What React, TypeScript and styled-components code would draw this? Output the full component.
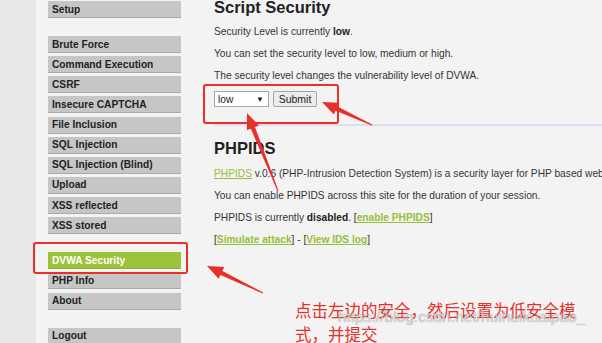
import React from "react";
import styled, { createGlobalStyle } from "styled-components";

const Colors = {
  page: "#f3f3f3",
  stripe: "#e8e8e8",
  menu: "#c6c6c6",
  menuEdge: "#a9a9a9",
  active: "#9dc33b",
  text: "#333",
  link: "#98bf3b",
  red: "#e8302a",
};

const GlobalStyle = createGlobalStyle`
  html, body {
    margin: 0;
    padding: 0;
    background: ${Colors.page};
  }
  body {
    width: 602px;
    height: 343px;
    overflow: hidden;
    font-family: "Liberation Sans", Arial, sans-serif;
  }
`;

const menuGroups: string[][] = [
  ["Setup"],
  [
    "Brute Force",
    "Command Execution",
    "CSRF",
    "Insecure CAPTCHA",
    "File Inclusion",
    "SQL Injection",
    "SQL Injection (Blind)",
    "Upload",
    "XSS reflected",
    "XSS stored",
  ],
  ["DVWA Security", "PHP Info", "About"],
  ["Logout"],
];

type Pt = [number, number];

// tapered arrow: thin tail, wider near the head, triangular head at the tip
const arrowPoints = (tail: Pt, tip: Pt, headLen = 16, headW = 13, w0 = 1, w1 = 4.5) => {
  const dx = tip[0] - tail[0];
  const dy = tip[1] - tail[1];
  const len = Math.hypot(dx, dy);
  const ux = dx / len;
  const uy = dy / len;
  const nx = -uy;
  const ny = ux;
  const bx = tip[0] - ux * headLen;
  const by = tip[1] - uy * headLen;
  const pts: Pt[] = [
    [tail[0] + (nx * w0) / 2, tail[1] + (ny * w0) / 2],
    [bx + (nx * w1) / 2, by + (ny * w1) / 2],
    [bx + (nx * headW) / 2, by + (ny * headW) / 2],
    tip,
    [bx - (nx * headW) / 2, by - (ny * headW) / 2],
    [bx - (nx * w1) / 2, by - (ny * w1) / 2],
    [tail[0] - (nx * w0) / 2, tail[1] - (ny * w0) / 2],
  ];
  return pts.map((p) => `${p[0].toFixed(1)},${p[1].toFixed(1)}`).join(" ");
};

export default function App() {
  return (
    <>
      <GlobalStyle />
      <Page>
        <Stripe />
        <Sidebar>
          {menuGroups.map((group, gi) => (
            <MenuGroup key={gi}>
              {group.map((item) => (
                <MenuItem key={item} active={item === "DVWA Security"}>
                  {item}
                </MenuItem>
              ))}
            </MenuGroup>
          ))}
        </Sidebar>

        <Main>
          <Heading>Script Security</Heading>
          <Para>
            Security Level is currently <b>low</b>.
          </Para>
          <Para>You can set the security level to low, medium or high.</Para>
          <Para>The security level changes the vulnerability level of DVWA.</Para>
          <Form>
            <SelectBox>
              <span>low</span>
              <Caret>▼</Caret>
            </SelectBox>
            <SubmitButton>Submit</SubmitButton>
          </Form>
          <Rule />
          <Heading second>PHPIDS</Heading>
          <Para>
            <Link>PHPIDS</Link> v.0.6 (PHP-Intrusion Detection System) is a security layer for PHP based web
            applications.
          </Para>
          <Para>You can enable PHPIDS across this site for the duration of your session.</Para>
          <Para>
            PHPIDS is currently <b>disabled</b>. [<Link bold>enable PHPIDS</Link>]
          </Para>
          <Para>
            [<Link bold>Simulate attack</Link>] - [<Link bold>View IDS log</Link>]
          </Para>
        </Main>

        <Overlay width="602" height="343" viewBox="0 0 602 343">
          <rect x="34" y="243" width="153" height="30" rx="2" fill="none" stroke={Colors.red} strokeWidth="2" />
          <rect x="204" y="85" width="134" height="38" rx="2" fill="none" stroke={Colors.red} strokeWidth="2" />
          <polygon points={arrowPoints([372, 125], [322, 102])} fill={Colors.red} />
          <polygon points={arrowPoints([278, 191], [247, 113])} fill={Colors.red} />
          <polygon points={arrowPoints([263, 293], [207, 266])} fill={Colors.red} />
        </Overlay>

        <Note>
          点击左边的安全，然后设置为低安全模
          <br />
          式，并提交
        </Note>
        <Watermark>https://blog.csdn.net/huihuikuaipao_</Watermark>
      </Page>
    </>
  );
}

const Page = styled.div`
  position: relative;
  display: grid;
  grid-template-columns: 36px 178px 1fr;
  width: 602px;
  height: 343px;
  overflow: hidden;
  background: ${Colors.page};
`;

const Stripe = styled.div`
  background: ${Colors.stripe};
`;

const Sidebar = styled.div`
  display: flex;
  flex-direction: column;
  gap: 18px;
  padding: 1px 0 0 12px;
`;

const MenuGroup = styled.div`
  display: flex;
  flex-direction: column;
  gap: 3.15px;
  width: 133px;
`;

const MenuItem = styled.div<{ active?: boolean }>`
  box-sizing: border-box;
  height: 17px;
  padding: 0 0 0 4px;
  display: flex;
  align-items: center;
  font-size: 10.2px;
  font-weight: bold;
  white-space: nowrap;
  color: ${(p) => (p.active ? "#fff" : "#222")};
  background: ${(p) => (p.active ? Colors.active : Colors.menu)};
  border-bottom: 1px solid ${(p) => (p.active ? "#8db02f" : Colors.menuEdge)};
`;

const Main = styled.div`
  display: flex;
  flex-direction: column;
  align-items: flex-start;
  min-width: 0;
  overflow: hidden;
  white-space: nowrap;
  color: ${Colors.text};
  font-size: 10.2px;
`;

const Heading = styled.div<{ second?: boolean }>`
  margin: ${(p) => (p.second ? "12px 0 4.5px" : "-3px 0 3.5px")};
  height: 20px;
  line-height: 20px;
  font-size: 16.5px;
  font-weight: bold;
  color: #222;
`;

const Para = styled.div`
  line-height: 22px;
  b {
    color: #222;
  }
`;

const Link = styled.span<{ bold?: boolean }>`
  color: ${Colors.link};
  text-decoration: underline;
  font-weight: ${(p) => (p.bold ? "bold" : "normal")};
`;

const Form = styled.div`
  display: flex;
  align-items: center;
  gap: 4px;
  margin-top: 4.5px;
  height: 16px;
`;

const SelectBox = styled.div`
  box-sizing: border-box;
  width: 55px;
  height: 16px;
  padding: 0 4px 0 3px;
  display: flex;
  align-items: center;
  justify-content: space-between;
  background: #fff;
  border: 1px solid #a6a6a6;
  font-size: 10.2px;
  color: #222;
`;

const Caret = styled.span`
  font-size: 8px;
  color: #222;
`;

const SubmitButton = styled.div`
  box-sizing: border-box;
  width: 44px;
  height: 16px;
  display: flex;
  align-items: center;
  justify-content: center;
  background: #ececec;
  border: 1px solid #a3a3a3;
  border-radius: 2px;
  font-size: 10.5px;
  color: #222;
`;

const Rule = styled.div`
  align-self: stretch;
  margin: 17px 0 0 -10px;
  height: 2px;
  background: #dedef0;
`;

const Overlay = styled.svg`
  position: absolute;
  left: 0;
  top: 0;
  pointer-events: none;
`;

const Watermark = styled.div`
  position: absolute;
  left: 338px;
  top: 308px;
  font-size: 15.5px;
  color: rgba(255, 255, 255, 0.6);
  text-shadow: 0 0 1px rgba(0, 0, 0, 0.25), 0 0 1px rgba(0, 0, 0, 0.25);
  white-space: nowrap;
`;

const Note = styled.div`
  position: absolute;
  left: 295px;
  top: 298px;
  font-family: "Noto Sans CJK SC", sans-serif;
  font-size: 16.5px;
  line-height: 24px;
  color: ${Colors.red};
  white-space: nowrap;
`;
